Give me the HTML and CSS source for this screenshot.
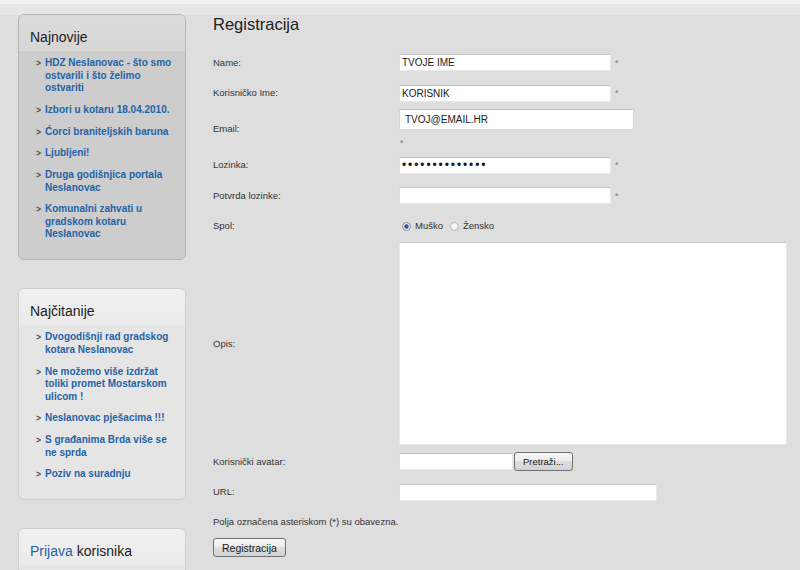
FILE: index.html
```html
<!DOCTYPE html>
<html lang="hr">
<head>
<meta charset="utf-8">
<title>Registracija</title>
<link rel="stylesheet" href="styles.css">
</head>
<body>
<div class="page">
  <aside class="sidebar">
    <section class="box box-dark">
      <h2 class="box-title">Najnovije</h2>
      <ul class="box-list">
        <li><a href="#">HDZ Neslanovac - što smo ostvarili i što želimo ostvariti</a></li>
        <li><a href="#">Izbori u kotaru 18.04.2010.</a></li>
        <li><a href="#">Ćorci braniteljskih baruna</a></li>
        <li><a href="#">Ljubljeni!</a></li>
        <li><a href="#">Druga godišnjica portala Neslanovac</a></li>
        <li><a href="#">Komunalni zahvati u gradskom kotaru Neslanovac</a></li>
      </ul>
    </section>
    <section class="box">
      <h2 class="box-title">Najčitanije</h2>
      <ul class="box-list">
        <li><a href="#">Dvogodišnji rad gradskog kotara Neslanovac</a></li>
        <li><a href="#">Ne možemo više izdržat toliki promet Mostarskom ulicom !</a></li>
        <li><a href="#">Neslanovac pješacima !!!</a></li>
        <li><a href="#">S građanima Brda više se ne sprda</a></li>
        <li><a href="#">Poziv na suradnju</a></li>
      </ul>
    </section>
    <section class="box box-last">
      <h2 class="box-title"><span class="blue">Prijava</span> korisnika</h2>
      <div class="box-empty"></div>
    </section>
  </aside>

  <main class="main">
    <h1 class="title">Registracija</h1>
    <form class="reg-form">
      <label class="lbl">Name:</label>
      <div class="field"><input class="txt w212" type="text" value="TVOJE IME"><span class="req">*</span></div>

      <label class="lbl">Korisničko Ime:</label>
      <div class="field"><input class="txt w212" type="text" value="KORISNIK"><span class="req">*</span></div>

      <label class="lbl">Email:</label>
      <div class="field field-col"><input class="txt email" type="text" value="TVOJ@EMAIL.HR"><span class="req req-below">*</span></div>

      <label class="lbl">Lozinka:</label>
      <div class="field"><input class="txt w212 pass" type="password" value="12345678901234"><span class="req">*</span></div>

      <label class="lbl">Potvrda lozinke:</label>
      <div class="field"><input class="txt w212" type="password" value=""><span class="req">*</span></div>

      <label class="lbl">Spol:</label>
      <div class="field radios">
        <span class="radio checked"></span><span class="rlabel">Muško</span>
        <span class="radio radio-2"></span><span class="rlabel">Žensko</span>
      </div>

      <label class="lbl">Opis:</label>
      <div class="field"><textarea class="area"></textarea></div>

      <label class="lbl">Korisnički avatar:</label>
      <div class="field"><input class="txt file" type="text" value=""><button type="button" class="btn btn-small">Pretraži...</button></div>

      <label class="lbl">URL:</label>
      <div class="field"><input class="txt url" type="text" value=""></div>
    </form>
    <p class="note">Polja označena asteriskom (*) su obavezna.</p>
    <button type="button" class="btn btn-submit">Registracija</button>
  </main>
</div>
</body>
</html>
```

FILE: styles.css
```css
html, body {
  margin: 0;
  padding: 0;
  overflow: hidden;
  height: 100%;
}

body {
  font-family: "Liberation Sans", Arial, sans-serif;
  color: #333;
  background: linear-gradient(#f1f1f1 0, #f1f1f1 4px, #e6e6e6 4px, #e6e6e6 15px, #dedede 15px);
}

.page {
  display: flex;
  align-items: flex-start;
  padding: 14px 0 0 18px;
  gap: 27px;
  height: 556px;
  overflow: hidden;
}

/* ---------- sidebar ---------- */
.sidebar {
  width: 168px;
  flex: 0 0 168px;
  display: flex;
  flex-direction: column;
  gap: 28.5px;
}

.box {
  border: 1px solid #cfcfcf;
  border-radius: 6px;
  background: #e5e5e5;
  overflow: hidden;
}

.box-last {
  border-bottom-left-radius: 0;
  border-bottom-right-radius: 0;
  border-bottom: 0;
}

.box-dark {
  border-color: #b5b5b5;
  background: #cdcdcd;
}

.box-title {
  margin: 0;
  padding: 13px 11px 5px;
  font-size: 14px;
  line-height: 18px;
  font-weight: normal;
  color: #1c1c1c;
  background: linear-gradient(#f0f0f0, #ebebeb);
}

.box-dark .box-title {
  background: linear-gradient(#dcdcdc, #d6d6d6);
  border-bottom: 1px solid #dedbd0;
  padding-bottom: 4px;
}

.blue {
  color: #2563a6;
}

.box-list {
  list-style: none;
  margin: 0;
  padding: 6px 12px 18px 17px;
  display: flex;
  flex-direction: column;
  gap: 9.25px;
}

.box-list li {
  display: flex;
  font-size: 10px;
  line-height: 12.5px;
  font-weight: bold;
}

.box-list li::before {
  content: ">";
  flex: 0 0 9px;
  font-size: 8.5px;
  color: #4a4a4a;
  font-weight: bold;
}

.box-list a {
  color: #2563a6;
  text-decoration: none;
}

.box-empty {
  height: 20px;
}

/* ---------- main ---------- */
.main {
  flex: 1;
}

.title {
  margin: 0 0 13px;
  font-size: 16.5px;
  line-height: 20px;
  font-weight: normal;
  color: #222;
}

.reg-form {
  display: grid;
  grid-template-columns: 186px 1fr;
  grid-template-rows: 31px 30px 42px 30px 31px 30px 205px 31px 30px;
  align-items: center;
}

.lbl {
  font-size: 9.5px;
  line-height: 12px;
  color: #333;
}

.field {
  display: flex;
  align-items: center;
  gap: 4px;
}

.field-col {
  flex-direction: column;
  align-items: flex-start;
  align-self: start;
  padding-top: 1px;
  gap: 0;
}

.txt {
  box-sizing: border-box;
  height: 17px;
  margin: 0;
  padding: 0 2px;
  font-family: "Liberation Sans", Arial, sans-serif;
  font-size: 10px;
  color: #1a1a1a;
  background: #fff;
  border: 1px solid #e9e9e9;
  border-top-color: #c4c4c4;
  border-left-color: #dcdcdc;
  outline: none;
}

.w212 {
  width: 212px;
}

.pass {
  font-size: 12px;
  letter-spacing: 1.9px;
}

.email {
  width: 235px;
  height: 21px;
  padding: 0 5px;
  border-color: #d4d4d4;
  border-top-color: #c4c4c4;
}

.file {
  width: 114px;
}

.url {
  width: 258px;
}

.req {
  font-size: 9px;
  line-height: 12px;
  color: #777;
}

.req-below {
  margin: 7px 0 0 1px;
}

.radios {
  gap: 0;
}

.radio {
  box-sizing: border-box;
  width: 9px;
  height: 9px;
  border-radius: 50%;
  border: 1px solid #b9b9b9;
  background: radial-gradient(circle at 40% 40%, #ffffff, #e2e2e2);
  margin-left: 3px;
}

.radio.checked {
  border-color: #8d8d8d;
  background: radial-gradient(circle, #1e4f9a 0, #2a63b5 1.8px, #e8e8e8 2.6px, #f4f4f4 4px);
}

.radio-2 {
  margin-left: 7px;
}

.rlabel {
  margin-left: 4px;
  font-size: 9.5px;
  line-height: 12px;
  color: #333;
}

.area {
  box-sizing: border-box;
  width: 388px;
  height: 203px;
  margin: 0;
  padding: 2px;
  resize: none;
  background: #fff;
  border: 1px solid #e3e8e8;
  border-top-color: #c8cfcf;
  outline: none;
}

.btn {
  box-sizing: border-box;
  margin: 0;
  font-family: "Liberation Sans", Arial, sans-serif;
  color: #1a1a1a;
  border: 1px solid #727272;
  border-radius: 3px;
  background: linear-gradient(#f6f6f6, #ececec 50%, #dedede 50%, #d2d2d2);
  cursor: pointer;
}

.btn-small {
  height: 19px;
  padding: 0 8px;
  font-size: 9.5px;
  margin-left: -3px;
}

.note {
  margin: 9px 0 0;
  font-size: 9.5px;
  line-height: 12px;
  color: #333;
}

.btn-submit {
  display: block;
  margin-top: 10px;
  height: 19px;
  padding: 0 8px;
  font-size: 10.5px;
}
```
